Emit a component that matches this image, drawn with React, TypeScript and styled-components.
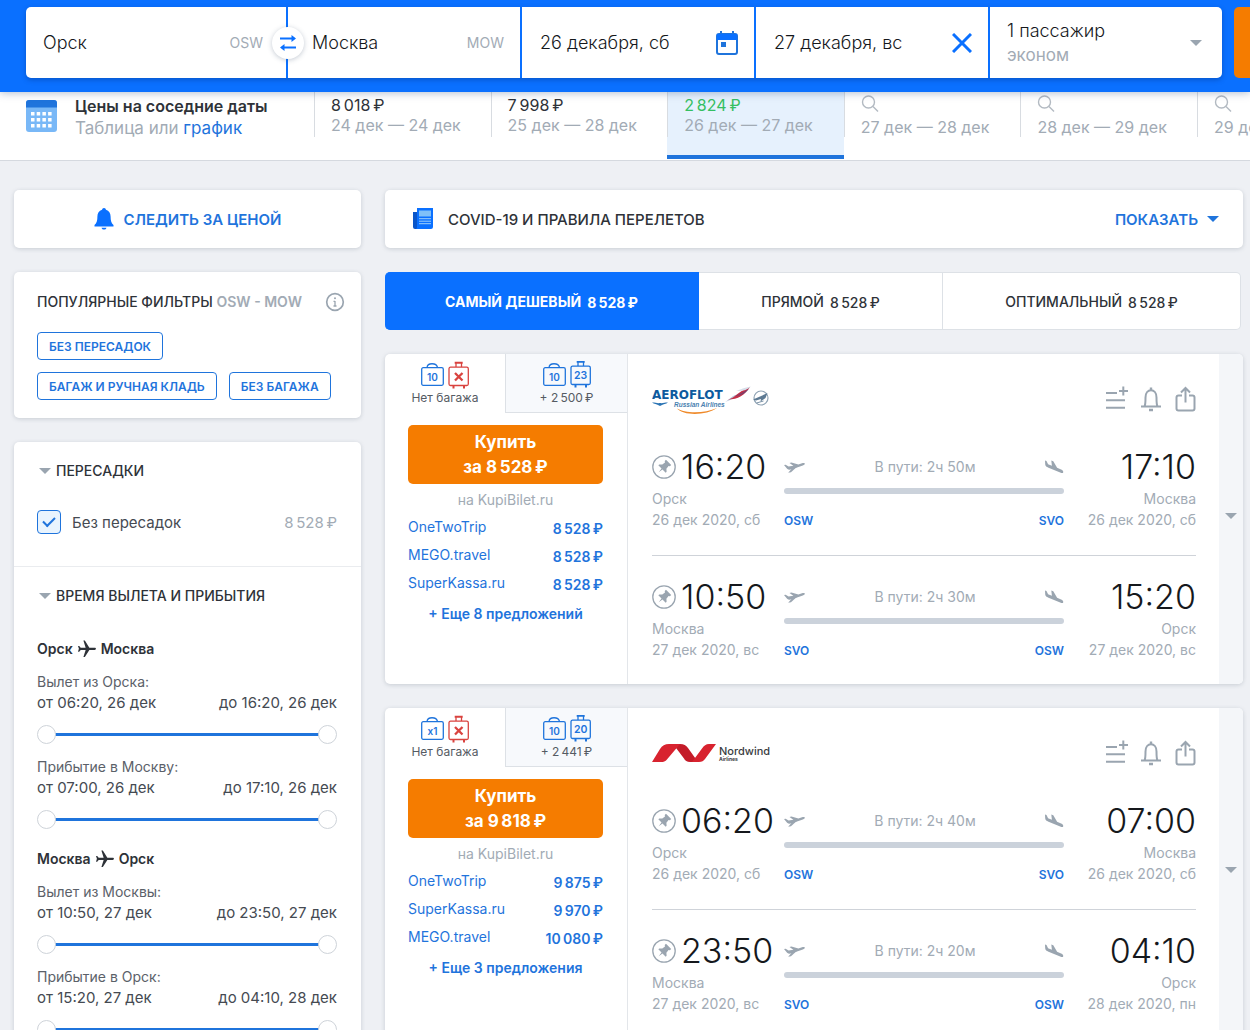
import React from "react";
import styled, { createGlobalStyle, css } from "styled-components";

const color = {
  brand: "#0a70ff",
  link: "#1f74dc",
  text: "#2e3238",
  soft: "#454a52",
  dark: "#15181c",
  muted: "#a2abb5",
  icon: "#9aa5b0",
  orange: "#f57c00",
  line: "#dde1e6",
  page: "#eef0f4",
};

const GlobalStyle = createGlobalStyle`
  *, *::before, *::after { box-sizing: border-box; }
  body {
    margin: 0;
    background: ${color.page};
    color: ${color.text};
    font-family: Inter, "Noto Sans", sans-serif;
    font-size: 14px;
  }
  button, input { font: inherit; color: inherit; }
  button { border: 0; padding: 0; background: none; cursor: pointer; }
  a { color: ${color.link}; text-decoration: none; }
  h2, h3, p { margin: 0; }
  svg { display: block; flex: none; }
`;

const Page = styled.div`
  height: 100vh;
  overflow: hidden;
`;

/* ---------- Search header ---------- */

const Header = styled.header`
  position: relative;
  z-index: 2;
  padding: 7px 0 14px 26px;
  background: ${color.brand};
  box-shadow: 0 1px 8px rgba(30, 70, 120, 0.35);
`;

const SearchForm = styled.form`
  display: flex;
  gap: 12px;
`;

const Fields = styled.div`
  flex: 1;
  min-width: 0;
  display: grid;
  grid-template-columns: 260px repeat(4, minmax(0, 1fr));
  gap: 2px;
  border-radius: 5px;
  box-shadow: 0 2px 5px rgba(0, 40, 110, 0.35);
`;

const Field = styled.label<{ $left?: number }>`
  position: relative;
  display: flex;
  align-items: center;
  height: 71px;
  padding: 0 16px 0 ${(p) => p.$left ?? 18}px;
  background: #fff;
  &:first-child { border-radius: 5px 0 0 5px; padding-right: 23px; }
`;

const FieldInput = styled.input`
  flex: 1;
  min-width: 0;
  padding: 0;
  border: 0;
  outline: 0;
  background: none;
  color: ${color.dark};
  font-size: 18px;
  font-weight: 300;
`;

const Code = styled.span`
  color: ${color.muted};
  font-size: 14px;
`;

const IconButton = styled.button`
  display: flex;
  align-items: center;
  justify-content: center;
  color: ${color.icon};
`;

const SwapButton = styled(IconButton)`
  position: absolute;
  z-index: 1;
  top: 20px;
  right: -18px;
  width: 32px;
  height: 32px;
  border-radius: 50%;
  background: #fff;
  color: ${color.brand};
  box-shadow: 0 1px 5px rgba(60, 80, 110, 0.3);
`;

const Passengers = styled.button`
  display: flex;
  align-items: center;
  justify-content: space-between;
  height: 71px;
  padding: 0 20px 0 17px;
  border-radius: 0 5px 5px 0;
  background: #fff;
  color: ${color.dark};
  text-align: left;
  font-size: 18px;
  font-weight: 300;
  line-height: 24px;
`;

const Muted = styled.span`
  display: block;
  color: ${color.muted};
`;

const CabinClass = styled(Muted)`
  font-size: 17px;
  font-weight: 400;
`;

const SubmitButton = styled.button`
  flex: none;
  width: 160px;
  margin-right: -144px;
  border-radius: 5px;
  background: ${color.orange};
`;

/* ---------- Neighbouring dates ---------- */

const DatesBar = styled.section`
  display: flex;
  height: 69px;
  background: #fff;
  border-bottom: 1px solid #d5d9df;
`;

const DatesIntro = styled.div`
  flex: none;
  display: flex;
  gap: 18px;
  width: 314px;
  padding: 3px 0 0 26px;
  font-size: 17px;
  line-height: 22px;
  color: ${color.muted};
`;

const IntroIcon = styled.span`
  padding-top: 5px;
`;

const DatesTitle = styled.h2`
  font-size: 16px;
  font-weight: 600;
  color: ${color.text};
`;

const DatesList = styled.div`
  flex: 1;
  min-width: 0;
  display: flex;
  overflow: hidden;
`;

const DateCell = styled.button<{ $active?: boolean }>`
  flex: 0 0 calc(100% / 5.3);
  display: flex;
  flex-direction: column;
  align-items: flex-start;
  padding: 3px 0 0 17px;
  font-size: 16px;
  line-height: 20px;
  text-align: left;
  white-space: nowrap;
  background: linear-gradient(#d8dce1, #d8dce1) 0 0 / 1px 45px no-repeat;
  ${(p) =>
    p.$active &&
    css`
      height: 67px;
      background-color: #e6f1fd;
      border-bottom: 4px solid ${color.link};
      color: #35bf62;
    `}
`;

const SearchGlyph = styled.span`
  height: 22px;
  color: #b3bac2;
`;

/* ---------- Layout ---------- */

const Content = styled.main`
  display: grid;
  grid-template-columns: 347px minmax(0, 1fr);
  gap: 24px;
  padding: 29px 7px 24px 14px;
`;

const Column = styled.div`
  display: flex;
  flex-direction: column;
  gap: 24px;
`;

const cardStyle = css`
  background: #fff;
  border-radius: 5px;
  box-shadow: 0 1px 4px rgba(70, 80, 100, 0.22);
`;

const Card = styled.section`
  ${cardStyle}
`;

const FollowButton = styled.button`
  ${cardStyle}
  display: flex;
  align-items: center;
  justify-content: center;
  gap: 10px;
  height: 58px;
  color: ${color.link};
  font-size: 15px;
  font-weight: 600;
`;

/* ---------- Filters ---------- */

const PopularCard = styled(Card)`
  padding: 20px 16px 18px 23px;
`;

const PopularHead = styled.div`
  display: flex;
  align-items: center;
  justify-content: space-between;
  height: 20px;
  margin-bottom: 20px;
`;

const FilterTitle = styled.h3`
  font-size: 14px;
  font-weight: 500;
  line-height: 20px;
  color: ${color.text};
`;

const Route = styled.span`
  color: ${color.muted};
  font-weight: 600;
`;

const Chips = styled.div`
  display: flex;
  flex-wrap: wrap;
  gap: 12px;
`;

const Chip = styled.button`
  height: 28px;
  padding: 0 11px;
  border: 1px solid ${color.link};
  border-radius: 4px;
  color: ${color.link};
  font-size: 12px;
  font-weight: 600;
`;

const FilterSection = styled.div`
  padding: 19px 24px 23px 23px;
  & + & { border-top: 1px solid #eaecef; }
`;

const SectionToggle = styled.button`
  display: flex;
  align-items: center;
  gap: 5px;
  padding-left: 2px;
  font-weight: 500;
  line-height: 20px;
  color: ${color.text};
`;

const CheckRow = styled.label`
  display: flex;
  align-items: center;
  gap: 11px;
  height: 42px;
  margin-top: 20px;
  color: ${color.soft};
  font-size: 15px;
`;

const CheckBox = styled.input`
  appearance: none;
  flex: none;
  width: 24px;
  height: 24px;
  margin: 0;
  border: 1px solid ${color.link};
  border-radius: 4px;
  background: #e9f4fe;
  &:checked {
    display: grid;
    place-items: center;
  }
  &:checked::before {
    content: "";
    width: 12px;
    height: 7px;
    margin-bottom: 3px;
    border: solid ${color.link};
    border-width: 0 0 2px 2px;
    transform: rotate(-45deg);
  }
`;

const CheckPrice = styled.span`
  margin-left: auto;
  color: ${color.muted};
`;

const Direction = styled.h3`
  display: flex;
  align-items: center;
  gap: 5px;
  margin: 33px 0 13px;
  font-size: 14px;
  font-weight: 600;
  line-height: 20px;
  & ~ & { margin-top: 20px; }
`;

const TimeFilter = styled.div`
  margin-bottom: 13px;
  line-height: 20px;
  font-size: 14px;
`;

const TimeLabel = styled.p`
  color: #5b6169;
`;

const TimeValues = styled.div`
  display: flex;
  justify-content: space-between;
  color: ${color.soft};
  line-height: 22px;
  font-size: 15px;
`;

const RangeTrack = styled.div`
  display: grid;
  height: 20px;
  margin-top: 10px;
  background: linear-gradient(${color.link}, ${color.link}) center / calc(100% - 36px) 3px no-repeat;
`;

const RangeInput = styled.input`
  appearance: none;
  grid-area: 1 / 1;
  width: 100%;
  height: 20px;
  margin: 0;
  background: none;
  pointer-events: none;
  &::-webkit-slider-thumb {
    appearance: none;
    width: 19px;
    height: 19px;
    border: 1px solid #ced3d9;
    border-radius: 50%;
    background: #fff;
    pointer-events: auto;
  }
`;

/* ---------- Results ---------- */

const CovidCard = styled(Card)`
  display: flex;
  align-items: center;
  gap: 15px;
  height: 58px;
  padding: 0 24px 0 28px;
`;

const CovidTitle = styled.h2`
  font-size: 15px;
  font-weight: 500;
`;

const ShowButton = styled.button`
  display: flex;
  align-items: center;
  gap: 9px;
  margin-left: auto;
  color: ${color.link};
  font-size: 15px;
  font-weight: 600;
`;

const SortTabs = styled.div`
  display: grid;
  grid-template-columns: 314fr 244fr 298fr;
  height: 58px;
  margin-right: 2px;
`;

const SortTab = styled.button<{ $active?: boolean }>`
  display: flex;
  align-items: center;
  justify-content: center;
  gap: 6px;
  border: 1px solid ${color.line};
  border-left: 0;
  background: #fff;
  font-weight: 500;
  &:last-child { border-radius: 0 5px 5px 0; }
  ${(p) =>
    p.$active &&
    css`
      border-color: ${color.brand};
      border-radius: 5px 0 0 5px;
      background: ${color.brand};
      color: #fff;
      font-weight: 700;
    `}
`;

const SortPrice = styled.span`
  padding-top: 2px;
`;

const Ticket = styled.article`
  ${cardStyle}
  display: grid;
  grid-template-columns: 243px minmax(0, 1fr) 24px;
  min-height: 330px;
  overflow: hidden;
`;

const Offers = styled.div`
  border-right: 1px solid #e3e6ea;
`;

const BagTabs = styled.div`
  display: grid;
  grid-template-columns: 120px 1fr;
  height: 59px;
  margin-bottom: 12px;
`;

const BagTab = styled.button<{ $inactive?: boolean }>`
  display: flex;
  flex-direction: column;
  align-items: center;
  padding-top: 7px;
  font-size: 12px;
  line-height: 18px;
  color: #555b63;
  ${(p) =>
    p.$inactive &&
    css`
      background: #f7f9fc;
      border: solid ${color.line};
      border-width: 0 0 1px 1px;
    `}
`;

const OffersBody = styled.div`
  display: flex;
  flex-direction: column;
  padding: 0 24px 0 23px;
`;

const BuyButton = styled.button`
  height: 59px;
  border-radius: 5px;
  background: ${color.orange};
  color: #fff;
  font-size: 17px;
  font-weight: 700;
  line-height: 25px;
`;

const Note = styled.p`
  margin: 6px 0 5px;
  color: ${color.muted};
  line-height: 20px;
  text-align: center;
`;

const OfferLink = styled.a`
  display: flex;
  justify-content: space-between;
  height: 28px;
  line-height: 24px;
`;

const OfferPrice = styled.span`
  font-weight: 600;
  line-height: 28px;
`;

const MoreButton = styled.button`
  margin-top: 5px;
  color: ${color.link};
  font-weight: 600;
  line-height: 20px;
`;

const Flights = styled.div`
  padding: 0 23px 23px 24px;
`;

const FlightsHead = styled.div`
  display: flex;
  align-items: center;
  justify-content: space-between;
  height: 92px;
`;

const Actions = styled.div`
  display: flex;
  gap: 12px;
  padding-bottom: 2px;
`;

const Segment = styled.div`
  display: grid;
  grid-template-columns: 132px minmax(0, 1fr) 132px;
  color: ${color.muted};
  line-height: 21px;
  & + & {
    margin-top: 24px;
    padding-top: 20px;
    border-top: 1px solid #cfd3d9;
  }
`;

const Endpoint = styled.div<{ $end?: boolean }>`
  text-align: ${(p) => (p.$end ? "right" : "left")};
  white-space: nowrap;
`;

const TimeRow = styled.div<{ $end?: boolean }>`
  display: flex;
  align-items: center;
  justify-content: ${(p) => (p.$end ? "flex-end" : "flex-start")};
  gap: 5px;
  height: 42px;
`;

const Time = styled.span`
  color: ${color.dark};
  font-size: 34px;
  font-weight: 300;
  line-height: 40px;
`;

const Path = styled.div`
  padding-top: 11px;
`;

const PathRow = styled.div`
  display: flex;
  align-items: center;
  justify-content: space-between;
  line-height: 20px;
`;

const PathBar = styled.div`
  height: 6px;
  margin: 11px 0 17px;
  border-radius: 3px;
  background: #cbd2db;
`;

const Airport = styled.span`
  color: ${color.link};
  font-size: 12px;
  font-weight: 600;
`;

const ExpandButton = styled(IconButton)`
  padding-bottom: 6px;
  background: #f4f6f9;
`;

/* ---------- Icons ---------- */

const Caret = ({ fill = color.icon }: { fill?: string }) => (
  <svg width="12" height="6" viewBox="0 0 12 6">
    <path d="M0 0h12L6 6z" fill={fill} />
  </svg>
);

const SwapIcon = () => (
  <svg width="18" height="18" viewBox="0 0 18 18" fill="none" stroke="currentColor" strokeWidth="2.200">
    <path d="M1 4.500h13M17 13.500H4" />
    <path d="M12.500 1l4.500 3.500-4.500 3.500zM5.500 10L1 13.500 5.500 17z" fill="currentColor" stroke="none" />
  </svg>
);

const CalendarIcon = () => (
  <svg width="22" height="24" viewBox="0 0 22 24" fill="none">
    <path d="M5 0v4M17 0v4" stroke={color.link} strokeWidth="2" />
    <rect x="1" y="3" width="20" height="20" rx="2" stroke={color.link} strokeWidth="2" />
    <path d="M1 3h20v6H1z" fill={color.brand} />
    <rect x="5" y="11" width="5" height="5" fill={color.link} />
  </svg>
);

const CrossIcon = () => (
  <svg width="20" height="20" viewBox="0 0 20 20" stroke={color.brand} strokeWidth="3">
    <path d="M1 1l18 18M19 1L1 19" />
  </svg>
);

const CalendarGridIcon = () => (
  <svg width="31" height="32" viewBox="0 0 31 32">
    <rect width="31" height="32" rx="3" fill="#79b8f7" />
    <path d="M3 0h25a3 3 0 0 1 3 3v4.500H0V3a3 3 0 0 1 3-3z" fill={color.link} />
    {[12, 18, 24].map((y) =>
      [5, 10.7, 16.4, 22.1].map((x) => (
        <rect key={`${x}-${y}`} x={x} y={y} width="3.500" height="3.500" fill="#fff" />
      ))
    )}
  </svg>
);

const LoupeIcon = () => (
  <svg width="18" height="18" viewBox="0 0 18 18" fill="none" stroke="currentColor" strokeWidth="1.400">
    <circle cx="7.500" cy="7" r="6" />
    <path d="M12 11.500l5 5" />
  </svg>
);

const BellSolid = () => (
  <svg width="20" height="22" viewBox="0 0 20 22" fill={color.brand}>
    <path d="M10 0a2 2 0 0 0-2 1.700C5 2.600 3.400 5 3.400 8.500c0 4-.6 6.500-2.900 8.500v1.500h19V17c-2.300-2-2.900-4.500-2.900-8.500 0-3.500-1.600-5.900-4.600-6.800A2 2 0 0 0 10 0z" />
    <path d="M7.500 19.700h5c-.4 1.200-1.300 1.900-2.500 1.900s-2.100-.7-2.500-1.900z" />
  </svg>
);

const InfoIcon = () => (
  <svg width="20" height="20" viewBox="0 0 20 20" fill="none" stroke="currentColor">
    <circle cx="10" cy="10" r="8.300" strokeWidth="1.700" />
    <path d="M10 9v5M8.500 9.300H10M8.500 14h3" strokeWidth="1.300" />
    <circle cx="10" cy="6.300" r="1" fill="currentColor" stroke="none" />
  </svg>
);

const PlaneIcon = () => (
  <svg width="18" height="20" viewBox="2 1 20 22" fill={color.text}>
    <path
      transform="rotate(90 12 12)"
      d="M21 16v-1.600l-8-5V3.500c0-.83-.67-1.500-1.200-1.500S10.600 2.670 10.600 3.500V9.400l-8 5V16l8-2.500V19l-2 1.700V22l3.200-1 3.200 1v-1.300L13 19v-5.500z"
    />
  </svg>
);

const NewsIcon = () => (
  <svg width="20" height="22" viewBox="0 0 20 22">
    <path d="M0 4h5v17H2a2 2 0 0 1-2-2z" fill="#0a55c8" />
    <path d="M4 0h16v19a2 2 0 0 1-2 2H3a2 2 0 0 0 1-2z" fill={color.brand} />
    <path d="M6 2.500h12v6H6z" fill="#7fc0f8" />
    <path d="M6 10.700h12M6 13.200h12M6 15.700h12" stroke="#9fd0fa" strokeWidth="1" />
  </svg>
);

const BaggageIcon = ({ hand, hold }: { hand: string; hold?: string }) => (
  <svg width="48" height="28" viewBox="0 0 48 28" fill="none" strokeWidth="1.300">
    <g stroke={color.link}>
      <rect x="0.700" y="6.700" width="21.600" height="17.600" rx="1.500" />
      <path d="M6 6.500C6.500 1.500 15.500 1.500 16.500 6.500" />
    </g>
    <text x="11.500" y="19.500" textAnchor="middle" fontSize="10" fontWeight="600" fill={color.link}>
      {hand}
    </text>
    <g transform={hold ? "translate(0 -1)" : undefined}>
      <g stroke={hold ? color.link : "#d9433f"}>
        <rect x="28" y="6.200" width="19.300" height="18.300" rx="1.500" />
        <path d="M35 6V2M40.500 6V2" />
        <path d="M33.700 1.700h8" strokeWidth="2" />
        <path d="M32.500 25v2.500M43 25v2.500" strokeWidth="2" />
      </g>
      {hold ? (
        <text x="37.700" y="19" textAnchor="middle" fontSize="10.500" fontWeight="600" fill={color.link}>
          {hold}
        </text>
      ) : (
        <path d="M34 12l7.500 7.500M41.500 12L34 19.500" stroke="#d9433f" strokeWidth="2.300" />
      )}
    </g>
  </svg>
);

const ListPlusIcon = () => (
  <svg width="22" height="26" viewBox="0 0 22 26" fill="none" stroke="currentColor" strokeWidth="2">
    <path d="M0 7h11M0 14.200h19M0 21.700h19M17.300 .5v9M13 5h9" />
  </svg>
);

const BellIcon = () => (
  <svg width="22" height="26" viewBox="0 0 22 26" fill="none" stroke="currentColor" strokeWidth="2">
    <path d="M1 20.500h20M4.500 20.500c.8-1.500 1-4 1-9C5.500 7 8 4.300 11 4.300s5.500 2.700 5.500 7.200c0 5 .2 7.500 1 9" />
    <path d="M11 1.500v3M9 24h4" strokeWidth="2.400" />
  </svg>
);

const ShareIcon = () => (
  <svg width="22" height="26" viewBox="0 0 22 26" fill="none" stroke="currentColor" strokeWidth="2">
    <path d="M8 9.500H4.500A2 2 0 0 0 2.500 11.500v11a2 2 0 0 0 2 2h14a2 2 0 0 0 2-2v-11a2 2 0 0 0-2-2H15" />
    <path d="M11.500 16.500V2M7 6.500L11.500 2 16 6.500" />
  </svg>
);

const PinIcon = () => (
  <svg width="24" height="24" viewBox="0 0 24 24">
    <circle cx="12" cy="12" r="11.200" fill="none" stroke="currentColor" strokeWidth="1.300" />
    <g transform="rotate(45 12 12)" fill="currentColor">
      <path d="M8.300 5.500h7.400v1.800l-1.200.8.400 3.400 2.300 2v1.300h-4.500L12 19.500l-.7-4.700H6.800v-1.300l2.300-2 .4-3.400-1.200-.8z" />
    </g>
  </svg>
);

const TakeoffIcon = () => (
  <svg width="22" height="14" viewBox="0 0 22 14" fill={color.icon}>
    <path d="M0 5l1.600-.3 3 1.900 4.800-.9L5.500 3 7.400 2.400l7 2.100 3.600-1.200c1.500-.4 2.700-.3 2.900.3.200.7-.6 1.300-2.100 1.900L8 9.300l-1 .3c-1.500.3-3 .1-3.900-.8z" />
    <path d="M13 6.800l-6 5.400-2.800.6L8.300 8z" />
  </svg>
);

const LandingIcon = () => (
  <svg width="20" height="16" viewBox="0 0 20 16" fill={color.icon}>
    <path d="M1 1.500l1.500.5 1.600 3.200 3.800 1.500L7.300 1.500l2 .8 3.800 6.500 4 1.800c1.600.7 2.400 1.900 2.100 2.800-.3.800-1.500.8-3 .1L4.500 8.700C2.600 7.900 1.300 7 1.200 5.200z" />
  </svg>
);

const AeroflotLogo = () => (
  <svg width="118" height="30" viewBox="0 0 118 30" role="img" aria-label="Aeroflot Russian Airlines">
    <text x="0" y="14" fontFamily="DejaVu Sans, sans-serif" fontSize="12" fontWeight="700" fill="#0d5a9e">
      AEROFLOT
    </text>
    <text x="22" y="22" fontFamily="Liberation Sans, sans-serif" fontSize="6.500" fontStyle="italic" fontWeight="700" fill="#4a7fb0">
      Russian Airlines
    </text>
    <path d="M0 17.500c4 0 5 1 8 .5 3 .500 4-.5 8-.5-2 1.500-5 1.500-6 2.500L8 21l-2-1c-1-1-4-1-6-2.500z" fill="#2b74b4" />
    <path d="M25 23.500c8 5 28 5 40-.5-10 7.500-34 8-40 .5z" fill="#ef8a2a" />
    <path d="M73 17c4-2 6-6 11-7-2 3-5 5-11 7z" fill="#b9c7db" />
    <path d="M76 14.500c7-1 9-8 22-12.500-5 8-12 12.500-22 12.500z" fill="#c22f48" />
    <path d="M84 6c5-1.500 8-3.500 15-4.500-4 3.500-8 5-15 4.500z" fill="#d7dfea" />
    <path d="M82 11c5-1 9-4 15-7-3 4-8 7-15 7z" fill="#334f8f" opacity="0.500" />
    <circle cx="109" cy="13" r="7" fill="none" stroke="#8fa3b4" strokeWidth="1.200" />
    <path d="M101 14.500l7-3 7.500-3.500-2 5-5 3.500.5-2.500-5 1.500z" fill="#5d7a93" />
    <path d="M104.500 18l7-2" stroke="#7b92a6" />
  </svg>
);

const NordwindLogo = () => (
  <svg width="118" height="30" viewBox="0 0 118 30" role="img" aria-label="Nordwind Airlines">
    <path d="M21 5h7c4 0 6 1.500 8 4l10 14h-8c-3 0-5-1.500-6-3.500z" fill="#c41c29" />
    <path d="M0 23L8 10c2-3.500 5-5 9-5h11L14.500 21c-1.500 1.500-3 2-5 2z" fill="#d8232f" />
    <path d="M40 23l10-13.500C52 6.500 54 5 57 5h7L53 20c-1.500 2-3 3-6 3z" fill="#d8232f" />
    <text x="67" y="16" fontSize="11" fontWeight="500" fill="#3a3d42">
      Nordwind
    </text>
    <text x="67" y="22" fontSize="5" fontWeight="700" fill="#3a3d42">
      Airlines
    </text>
  </svg>
);

/* ---------- Data ---------- */

const dates = [
  { price: "8 018 ₽", range: "24 дек — 24 дек" },
  { price: "7 998 ₽", range: "25 дек — 28 дек" },
  { price: "2 824 ₽", range: "26 дек — 27 дек", active: true },
  { range: "27 дек — 28 дек" },
  { range: "28 дек — 29 дек" },
  { range: "29 дек — 30 дек" },
];

const directions = [
  {
    from: "Орск",
    to: "Москва",
    filters: [
      ["Вылет из Орска:", "от 06:20, 26 дек", "до 16:20, 26 дек"],
      ["Прибытие в Москву:", "от 07:00, 26 дек", "до 17:10, 26 дек"],
    ],
  },
  {
    from: "Москва",
    to: "Орск",
    filters: [
      ["Вылет из Москвы:", "от 10:50, 27 дек", "до 23:50, 27 дек"],
      ["Прибытие в Орск:", "от 15:20, 27 дек", "до 04:10, 28 дек"],
    ],
  },
];

const sorts = [
  { name: "САМЫЙ ДЕШЕВЫЙ", price: "8 528 ₽", active: true },
  { name: "ПРЯМОЙ", price: "8 528 ₽" },
  { name: "ОПТИМАЛЬНЫЙ", price: "8 528 ₽" },
];

type Stop = { time: string; city: string; date: string; code: string };
type Leg = { from: Stop; to: Stop; duration: string };
type TicketData = {
  id: string;
  logo: React.ReactNode;
  hand: string;
  extraHold: string;
  extraPrice: string;
  price: string;
  offers: [string, string][];
  more: string;
  legs: Leg[];
};

const stop = (time: string, city: string, date: string, code: string): Stop => ({ time, city, date, code });

const tickets: TicketData[] = [
  {
    id: "su",
    logo: <AeroflotLogo />,
    hand: "10",
    extraHold: "23",
    extraPrice: "+ 2 500 ₽",
    price: "8 528 ₽",
    offers: [
      ["OneTwoTrip", "8 528 ₽"],
      ["MEGO.travel", "8 528 ₽"],
      ["SuperKassa.ru", "8 528 ₽"],
    ],
    more: "+ Еще 8 предложений",
    legs: [
      {
        from: stop("16:20", "Орск", "26 дек 2020, сб", "OSW"),
        to: stop("17:10", "Москва", "26 дек 2020, сб", "SVO"),
        duration: "В пути: 2ч 50м",
      },
      {
        from: stop("10:50", "Москва", "27 дек 2020, вс", "SVO"),
        to: stop("15:20", "Орск", "27 дек 2020, вс", "OSW"),
        duration: "В пути: 2ч 30м",
      },
    ],
  },
  {
    id: "n4",
    logo: <NordwindLogo />,
    hand: "x1",
    extraHold: "20",
    extraPrice: "+ 2 441 ₽",
    price: "9 818 ₽",
    offers: [
      ["OneTwoTrip", "9 875 ₽"],
      ["SuperKassa.ru", "9 970 ₽"],
      ["MEGO.travel", "10 080 ₽"],
    ],
    more: "+ Еще 3 предложения",
    legs: [
      {
        from: stop("06:20", "Орск", "26 дек 2020, сб", "OSW"),
        to: stop("07:00", "Москва", "26 дек 2020, сб", "SVO"),
        duration: "В пути: 2ч 40м",
      },
      {
        from: stop("23:50", "Москва", "27 дек 2020, вс", "SVO"),
        to: stop("04:10", "Орск", "28 дек 2020, пн", "OSW"),
        duration: "В пути: 2ч 20м",
      },
    ],
  },
];

/** Prices are set with thin spaces between digit groups and the currency sign. */
const thin = (price: string) => price.replace(/(\d) (?=[\d₽])/g, "$1\u2009");

/* ---------- Components ---------- */

const SearchHeader = () => (
  <Header>
    <SearchForm onSubmit={(e) => e.preventDefault()}>
      <Fields>
        <Field $left={17}>
          <FieldInput aria-label="Откуда" defaultValue="Орск" />
          <Code>OSW</Code>
          <SwapButton type="button" aria-label="Поменять местами">
            <SwapIcon />
          </SwapButton>
        </Field>
        <Field $left={24}>
          <FieldInput aria-label="Куда" defaultValue="Москва" />
          <Code>MOW</Code>
        </Field>
        <Field>
          <FieldInput aria-label="Туда" defaultValue="26 декабря, сб" />
          <CalendarIcon />
        </Field>
        <Field>
          <FieldInput aria-label="Обратно" defaultValue="27 декабря, вс" />
          <IconButton type="button" aria-label="Очистить дату">
            <CrossIcon />
          </IconButton>
        </Field>
        <Passengers type="button">
          <span>
            1 пассажир
            <CabinClass>эконом</CabinClass>
          </span>
          <Caret />
        </Passengers>
      </Fields>
      <SubmitButton aria-label="Найти" />
    </SearchForm>
  </Header>
);

const NearbyDates = () => (
  <DatesBar>
    <DatesIntro>
      <IntroIcon>
        <CalendarGridIcon />
      </IntroIcon>
      <div>
        <DatesTitle>Цены на соседние даты</DatesTitle>
        Таблица или <a href="#chart">график</a>
      </div>
    </DatesIntro>
    <DatesList>
      {dates.map((d) => (
        <DateCell key={d.range} $active={d.active}>
          {d.price ? (
            <span>{thin(d.price)}</span>
          ) : (
            <SearchGlyph>
              <LoupeIcon />
            </SearchGlyph>
          )}
          <Muted>{d.range}</Muted>
        </DateCell>
      ))}
    </DatesList>
  </DatesBar>
);

const TimeRange = ({ label, from, to }: { label: string; from: string; to: string }) => (
  <TimeFilter>
    <TimeLabel>{label}</TimeLabel>
    <TimeValues>
      <span>{from}</span>
      <span>{to}</span>
    </TimeValues>
    <RangeTrack>
      <RangeInput type="range" aria-label={`${label} от`} defaultValue={0} />
      <RangeInput type="range" aria-label={`${label} до`} defaultValue={100} />
    </RangeTrack>
  </TimeFilter>
);

const Sidebar = () => (
  <Column as="aside">
    <FollowButton>
      <BellSolid />
      СЛЕДИТЬ ЗА ЦЕНОЙ
    </FollowButton>
    <PopularCard>
      <PopularHead>
        <FilterTitle>
          ПОПУЛЯРНЫЕ ФИЛЬТРЫ <Route>OSW - MOW</Route>
        </FilterTitle>
        <IconButton aria-label="О фильтрах">
          <InfoIcon />
        </IconButton>
      </PopularHead>
      <Chips>
        <Chip>БЕЗ ПЕРЕСАДОК</Chip>
        <Chip>БАГАЖ И РУЧНАЯ КЛАДЬ</Chip>
        <Chip>БЕЗ БАГАЖА</Chip>
      </Chips>
    </PopularCard>
    <Card>
      <FilterSection>
        <SectionToggle>
          <Caret />
          ПЕРЕСАДКИ
        </SectionToggle>
        <CheckRow>
          <CheckBox type="checkbox" defaultChecked />
          Без пересадок
          <CheckPrice>{thin("8 528 ₽")}</CheckPrice>
        </CheckRow>
      </FilterSection>
      <FilterSection>
        <SectionToggle>
          <Caret />
          ВРЕМЯ ВЫЛЕТА И ПРИБЫТИЯ
        </SectionToggle>
        {directions.map((d) => (
          <React.Fragment key={d.from}>
            <Direction>
              {d.from}
              <PlaneIcon />
              {d.to}
            </Direction>
            {d.filters.map(([label, from, to]) => (
              <TimeRange key={label} label={label} from={from} to={to} />
            ))}
          </React.Fragment>
        ))}
      </FilterSection>
    </Card>
  </Column>
);

const FlightLeg = ({ leg }: { leg: Leg }) => (
  <Segment>
    <Endpoint>
      <TimeRow>
        <IconButton aria-label="Закрепить рейс">
          <PinIcon />
        </IconButton>
        <Time>{leg.from.time}</Time>
      </TimeRow>
      <div>{leg.from.city}</div>
      <div>{leg.from.date}</div>
    </Endpoint>
    <Path>
      <PathRow>
        <TakeoffIcon />
        <span>{leg.duration}</span>
        <LandingIcon />
      </PathRow>
      <PathBar />
      <PathRow>
        <Airport>{leg.from.code}</Airport>
        <Airport>{leg.to.code}</Airport>
      </PathRow>
    </Path>
    <Endpoint $end>
      <TimeRow $end>
        <Time>{leg.to.time}</Time>
      </TimeRow>
      <div>{leg.to.city}</div>
      <div>{leg.to.date}</div>
    </Endpoint>
  </Segment>
);

const TicketCard = ({ ticket }: { ticket: TicketData }) => (
  <Ticket>
    <Offers>
      <BagTabs>
        <BagTab>
          <BaggageIcon hand={ticket.hand} />
          Нет багажа
        </BagTab>
        <BagTab $inactive>
          <BaggageIcon hand="10" hold={ticket.extraHold} />
          {thin(ticket.extraPrice)}
        </BagTab>
      </BagTabs>
      <OffersBody>
        <BuyButton>
          Купить
          <br />
          за {thin(ticket.price)}
        </BuyButton>
        <Note>на KupiBilet.ru</Note>
        {ticket.offers.map(([name, price]) => (
          <OfferLink key={name} href="#offer">
            <span>{name}</span>
            <OfferPrice>{thin(price)}</OfferPrice>
          </OfferLink>
        ))}
        <MoreButton>{ticket.more}</MoreButton>
      </OffersBody>
    </Offers>
    <Flights>
      <FlightsHead>
        {ticket.logo}
        <Actions>
          <IconButton aria-label="Добавить к сравнению">
            <ListPlusIcon />
          </IconButton>
          <IconButton aria-label="Следить за билетом">
            <BellIcon />
          </IconButton>
          <IconButton aria-label="Поделиться">
            <ShareIcon />
          </IconButton>
        </Actions>
      </FlightsHead>
      {ticket.legs.map((leg) => (
        <FlightLeg key={leg.from.time} leg={leg} />
      ))}
    </Flights>
    <ExpandButton aria-label="Подробнее">
      <Caret />
    </ExpandButton>
  </Ticket>
);

const Results = () => (
  <Column>
    <CovidCard>
      <NewsIcon />
      <CovidTitle>COVID-19 И ПРАВИЛА ПЕРЕЛЕТОВ</CovidTitle>
      <ShowButton>
        ПОКАЗАТЬ
        <Caret fill={color.link} />
      </ShowButton>
    </CovidCard>
    <SortTabs>
      {sorts.map((s) => (
        <SortTab key={s.name} $active={s.active}>
          <span>{s.name}</span>
          <SortPrice>{thin(s.price)}</SortPrice>
        </SortTab>
      ))}
    </SortTabs>
    {tickets.map((t) => (
      <TicketCard key={t.id} ticket={t} />
    ))}
  </Column>
);

export default function App() {
  return (
    <Page>
      <GlobalStyle />
      <SearchHeader />
      <NearbyDates />
      <Content>
        <Sidebar />
        <Results />
      </Content>
    </Page>
  );
}
